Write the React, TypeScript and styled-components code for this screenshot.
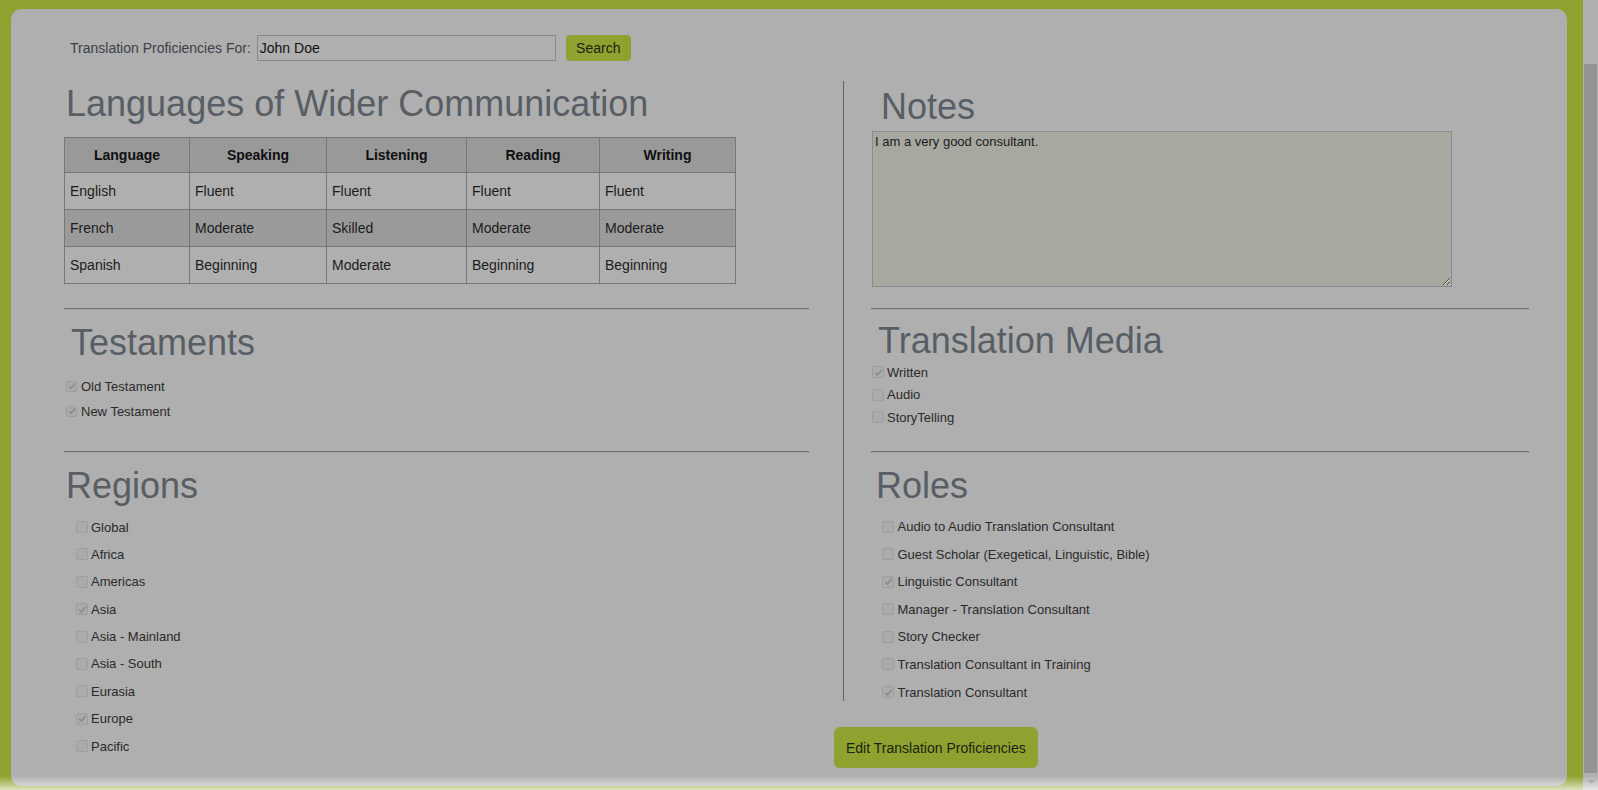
import React from 'react';
import styled, { createGlobalStyle, css } from 'styled-components';

const GlobalStyle = createGlobalStyle`
	html, body {
		margin: 0;
		padding: 0;
		height: 100%;
		overflow: hidden;
	}
	body {
		font-family: "Liberation Sans", Arial, sans-serif;
		background: #8fa22f;
	}
`;

const Page = styled.div`
	position: relative;
	display: flex;
	height: 790px;
`;

const Frame = styled.div`
	flex: 1;
	display: flex;
	background: #8fa22f;
	padding: 9px 16px 4px 11px;
`;

const Card = styled.div`
	flex: 1;
	background: #afafaf;
	border-radius: 10px;
	padding: 26px 0 0 53px;
`;

const SearchBar = styled.form`
	display: flex;
	align-items: center;
	height: 26px;
	margin-left: 6px;
`;

const SearchLabel = styled.label`
	font-size: 14px;
	color: #3b4147;
	margin-right: 6px;
`;

const SearchInput = styled.input`
	box-sizing: border-box;
	width: 299px;
	height: 26px;
	padding: 0 2px;
	border: 1px solid #8a8a8a;
	background: #afafaf;
	font: 14px "Liberation Sans", Arial, sans-serif;
	color: #111;
`;

const GreenButton = styled.button<{ $large?: boolean }>`
	border: none;
	background: #8fa22f;
	color: #1c1f12;
	font: 14px "Liberation Sans", Arial, sans-serif;
	cursor: pointer;
	${(p) =>
		p.$large
			? css`
					height: 41px;
					padding: 0 12px;
					border-radius: 6px;
			  `
			: css`
					width: 65px;
					height: 26px;
					margin-left: 10px;
					border-radius: 4px;
			  `}
`;

const Columns = styled.div`
	display: grid;
	grid-template-columns: 745px 686px;
	grid-template-rows: 227px 2px 141px 2px auto;
	column-gap: 34px;
	margin-top: 20px;
`;

const Cell = styled.div<{ $divided?: boolean }>`
	${(p) =>
		p.$divided &&
		css`
			border-left: 1px solid #606060;
			padding-left: 27px;
		`}
`;

const Rule = styled.hr`
	margin: 0;
	height: 0;
	border: 0;
	border-top: 1px solid #6e6e6e;
	border-bottom: 1px solid #a3a3a3;
`;

const Heading = styled.h1<{ $indent: number; $top: number; $bottom: number }>`
	margin: ${(p) => p.$top}px 0 ${(p) => p.$bottom}px ${(p) => p.$indent}px;
	font-size: 36px;
	line-height: 40px;
	font-weight: normal;
	color: #585e64;
`;

const Table = styled.table`
	border-collapse: collapse;
	table-layout: fixed;
	width: 671px;
	font-size: 14px;
	color: #1b1b1b;
`;

const Row = styled.tr<{ $shaded?: boolean; $h: number }>`
	height: ${(p) => p.$h}px;
	background: ${(p) => (p.$shaded ? '#9a9a9a' : 'transparent')};
`;

const Th = styled.th`
	border: 1px solid #777;
	background: #999;
	font-weight: bold;
	color: #0f0f0f;
	text-align: center;
	padding: 0 5px;
`;

const Td = styled.td`
	border: 1px solid #777;
	padding: 0 5px;
	text-align: left;
`;

const NotesBox = styled.textarea`
	display: block;
	box-sizing: border-box;
	margin-left: 1px;
	width: 580px;
	height: 156px;
	padding: 2px;
	border: 1px solid #8c8c8c;
	background: #a7a8a0;
	font: 13px "Liberation Sans", Arial, sans-serif;
	color: #1c1c1c;
	resize: both;
`;

const OptionList = styled.ul<{ $indent: number; $top: number; $gap: number }>`
	list-style: none;
	margin: ${(p) => p.$top}px 0 0 ${(p) => p.$indent}px;
	padding: 0;
	display: flex;
	flex-direction: column;
	gap: ${(p) => p.$gap}px;
`;

const Option = styled.li<{ $space: number }>`
	display: flex;
	align-items: center;
	gap: ${(p) => p.$space}px;
	height: 18px;
	font-size: 13px;
	color: #2a2a2a;
`;

const Box = styled.span<{ $size: number }>`
	box-sizing: border-box;
	display: flex;
	align-items: center;
	justify-content: center;
	width: ${(p) => p.$size}px;
	height: ${(p) => p.$size}px;
	border: 1px solid #9d9d9d;
	border-radius: 2px;
	background: #ababab;
`;

const RolesBox = styled.div`
	display: flow-root;
	border-left: 1px solid #606060;
	padding-left: 27px;
`;

const Footer = styled.div`
	display: flex;
	margin: 26px 0 0 -9px;
`;

const Scrollbar = styled.div`
	display: flex;
	flex-direction: column;
	width: 15px;
	background: #b0b0b0;
`;

const ScrollArrow = styled.div`
	height: 17px;
	display: flex;
	align-items: center;
	justify-content: center;
`;

const DownTriangle = styled.span`
	width: 0;
	height: 0;
	border-left: 4px solid transparent;
	border-right: 4px solid transparent;
	border-top: 4px solid #8d8d8d;
`;

const ScrollTrack = styled.div`
	flex: 1;
	padding: 47px 1px 0 1px;
`;

const ScrollThumb = styled.div`
	height: 709px;
	background: #939393;
`;

const BottomFade = styled.div`
	position: absolute;
	left: 0;
	right: 0;
	bottom: 0;
	height: 14px;
	background: linear-gradient(rgba(255, 255, 255, 0), rgba(255, 255, 255, 0.7));
	pointer-events: none;
`;

type Item = { label: string; checked?: boolean };

const CheckList = ({ items, indent, top, gap, size, space }: { items: Item[]; indent: number; top: number; gap: number; size: number; space: number }) => (
	<OptionList $indent={indent} $top={top} $gap={gap}>
		{items.map((item) => (
			<Option key={item.label} $space={space}>
				<Box $size={size}>
					{item.checked && (
						<svg width={size - 3} height={size - 3} viewBox="0 0 10 10">
							<path d="M1.5 5.4 L4 7.8 L8.6 1.8" fill="none" stroke="#8a8a8a" strokeWidth="1.7" />
						</svg>
					)}
				</Box>
				{item.label}
			</Option>
		))}
	</OptionList>
);

const languages = [
	['English', 'Fluent', 'Fluent', 'Fluent', 'Fluent'],
	['French', 'Moderate', 'Skilled', 'Moderate', 'Moderate'],
	['Spanish', 'Beginning', 'Moderate', 'Beginning', 'Beginning'],
];

const testaments: Item[] = [
	{ label: 'Old Testament', checked: true },
	{ label: 'New Testament', checked: true },
];

const media: Item[] = [{ label: 'Written', checked: true }, { label: 'Audio' }, { label: 'StoryTelling' }];

const regions: Item[] = [
	{ label: 'Global' },
	{ label: 'Africa' },
	{ label: 'Americas' },
	{ label: 'Asia', checked: true },
	{ label: 'Asia - Mainland' },
	{ label: 'Asia - South' },
	{ label: 'Eurasia' },
	{ label: 'Europe', checked: true },
	{ label: 'Pacific' },
];

const roles: Item[] = [
	{ label: 'Audio to Audio Translation Consultant' },
	{ label: 'Guest Scholar (Exegetical, Linguistic, Bible)' },
	{ label: 'Linguistic Consultant', checked: true },
	{ label: 'Manager - Translation Consultant' },
	{ label: 'Story Checker' },
	{ label: 'Translation Consultant in Training' },
	{ label: 'Translation Consultant', checked: true },
];

export default function App() {
	return (
		<Page>
			<GlobalStyle />
			<Frame>
				<Card>
					<SearchBar onSubmit={(e) => e.preventDefault()}>
						<SearchLabel htmlFor="who">Translation Proficiencies For:</SearchLabel>
						<SearchInput id="who" defaultValue="John Doe" />
						<GreenButton type="submit">Search</GreenButton>
					</SearchBar>

					<Columns>
						<Cell>
							<Heading $indent={2} $top={3} $bottom={13}>Languages of Wider Communication</Heading>
							<Table>
								<colgroup>
									<col style={{ width: 125 }} />
									<col style={{ width: 137 }} />
									<col style={{ width: 140 }} />
									<col style={{ width: 133 }} />
									<col style={{ width: 136 }} />
								</colgroup>
								<thead>
									<Row $h={35}>
										<Th>Language</Th>
										<Th>Speaking</Th>
										<Th>Listening</Th>
										<Th>Reading</Th>
										<Th>Writing</Th>
									</Row>
								</thead>
								<tbody>
									{languages.map((row, i) => (
										<Row key={row[0]} $h={37} $shaded={i === 1}>
											{row.map((v, j) => (
												<Td key={j}>{v}</Td>
											))}
										</Row>
									))}
								</tbody>
							</Table>
						</Cell>
						<Cell $divided>
							<Heading $indent={10} $top={6} $bottom={4}>Notes</Heading>
							<NotesBox readOnly defaultValue="I am a very good consultant." />
						</Cell>

						<Rule />
						<Cell $divided>
							<Rule />
						</Cell>

						<Cell>
							<Heading $indent={7} $top={13} $bottom={0}>Testaments</Heading>
							<CheckList items={testaments} indent={2} top={14} gap={7} size={11} space={4} />
						</Cell>
						<Cell $divided>
							<Heading $indent={7} $top={11} $bottom={0}>Translation Media</Heading>
							<CheckList items={media} indent={1} top={2} gap={4.5} size={12} space={3} />
						</Cell>

						<Rule />
						<Cell $divided>
							<Rule />
						</Cell>

						<Cell>
							<Heading $indent={2} $top={13} $bottom={0}>Regions</Heading>
							<CheckList items={regions} indent={12} top={12} gap={9.4} size={12} space={3} />
						</Cell>
						<Cell>
							<RolesBox>
								<Heading $indent={5} $top={13} $bottom={0}>Roles</Heading>
								<CheckList items={roles} indent={11} top={11.5} gap={9.6} size={12} space={3.5} />
							</RolesBox>
							<Footer>
								<GreenButton $large type="button">Edit Translation Proficiencies</GreenButton>
							</Footer>
						</Cell>
					</Columns>
				</Card>
			</Frame>
			<Scrollbar>
				<ScrollArrow />
				<ScrollTrack>
					<ScrollThumb />
				</ScrollTrack>
				<ScrollArrow>
					<DownTriangle />
				</ScrollArrow>
			</Scrollbar>
			<BottomFade />
		</Page>
	);
}
